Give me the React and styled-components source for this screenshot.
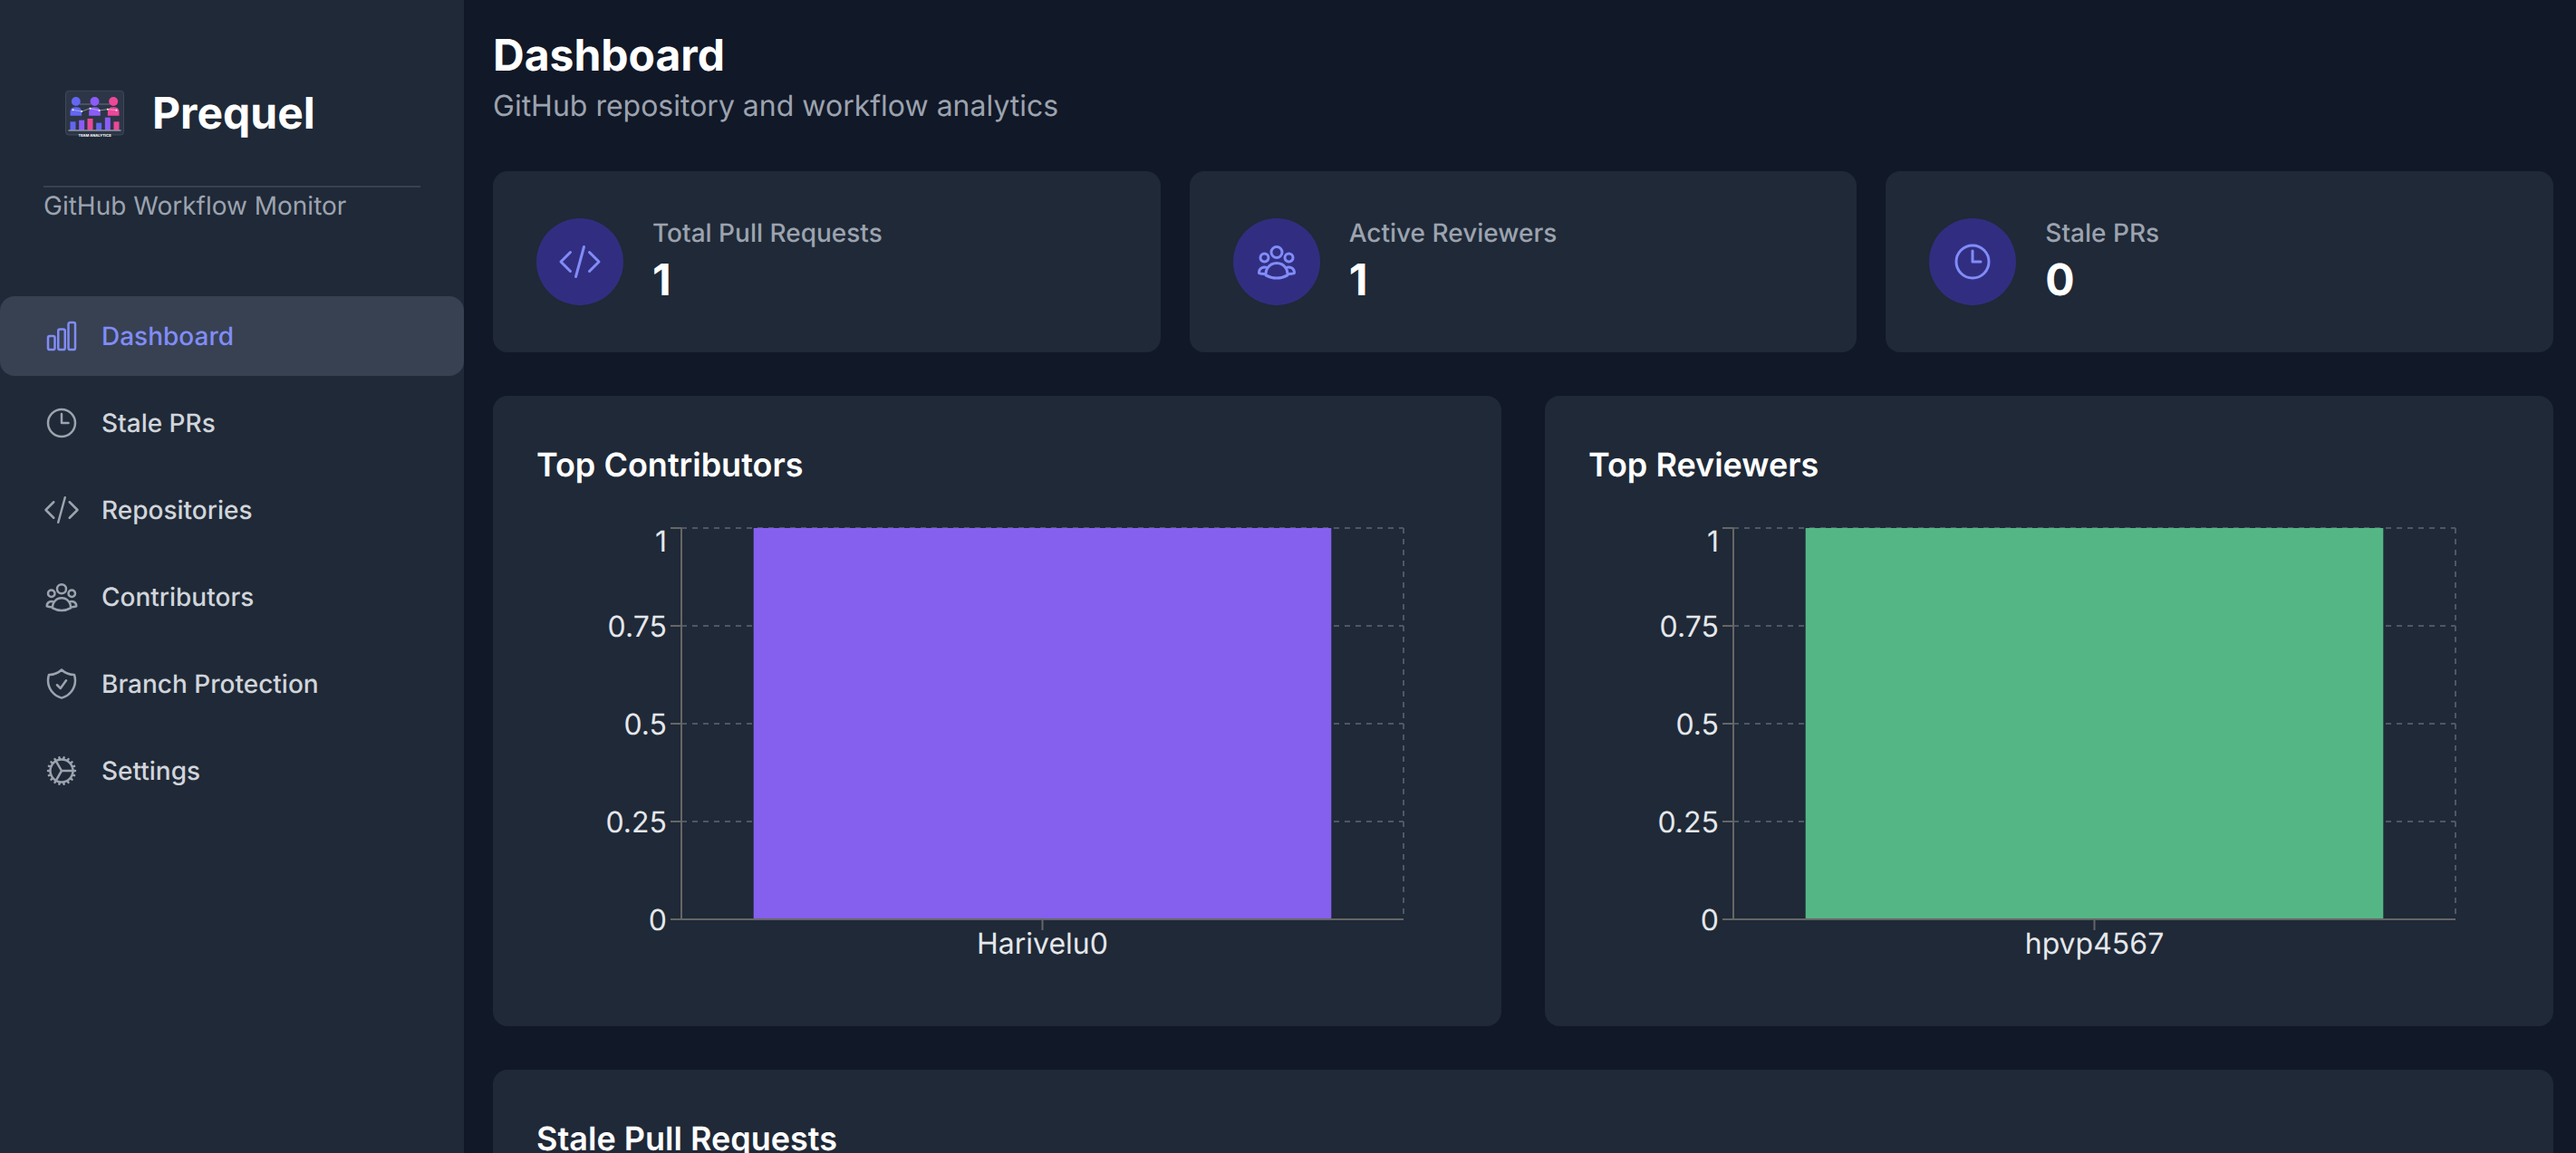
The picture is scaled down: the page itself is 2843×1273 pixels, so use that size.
import styled, { createGlobalStyle } from "styled-components";
import {
  HiOutlineChartBar,
  HiOutlineClock,
  HiOutlineCodeBracket,
  HiOutlineUserGroup,
  HiOutlineShieldCheck,
  HiOutlineCog,
} from "react-icons/hi2";

const GlobalStyle = createGlobalStyle`
  html, body {
    margin: 0;
    height: 100%;
    overflow: hidden;
    background: #111827;
    font-family: "Inter", "Liberation Sans", sans-serif;
    text-rendering: geometricPrecision;
  }
`;

const Shell = styled.div`
  display: flex;
  height: 100vh;
  overflow: hidden;
`;

const Sidebar = styled.aside`
  width: 512px;
  flex-shrink: 0;
  background: #1f2937;
  padding-top: 100px;
  box-sizing: border-box;
`;

const Brand = styled.div`
  display: flex;
  align-items: center;
  gap: 31px;
  height: 50px;
  padding-left: 72px;
`;

const BrandName = styled.span`
  font-size: 48px;
  font-weight: 700;
  color: #fff;
  line-height: 50px;
`;

const Divider = styled.hr`
  margin: 55px 48px 0;
  border: 0;
  height: 2px;
  background: #374151;
`;

const Tagline = styled.p`
  margin: 0;
  padding-left: 48px;
  font-size: 28px;
  line-height: 40px;
  color: #9ca3af;
`;

const Nav = styled.nav`
  display: flex;
  flex-direction: column;
  gap: 8px;
  margin-top: 80px;
`;

const NavItem = styled.a`
  display: flex;
  align-items: center;
  gap: 24px;
  height: 88px;
  padding-left: 48px;
  border-radius: 16px;
  font-size: 28px;
  font-weight: 500;
  background: ${(props) => (props.$active ? "#374151" : "transparent")};
  color: ${(props) => (props.$active ? "#818cf8" : "#d1d5db")};

  svg {
    color: ${(props) => (props.$active ? "#818cf8" : "#9ca3af")};
    flex-shrink: 0;
  }
`;

const Main = styled.main`
  flex: 1;
  min-width: 0;
  padding: 29px 25px 0 32px;
`;

const Title = styled.h1`
  margin: 0;
  font-size: 48px;
  line-height: 64px;
  font-weight: 700;
  color: #fff;
`;

const Subtitle = styled.p`
  margin: 0 0 48px;
  font-size: 32px;
  line-height: 48px;
  color: #9ca3af;
`;

const StatGrid = styled.section`
  display: grid;
  grid-template-columns: repeat(3, 1fr);
  gap: 32px;
  margin-bottom: 48px;
`;

const Card = styled.div`
  background: #1f2937;
  border-radius: 16px;
`;

const StatCard = styled(Card)`
  display: flex;
  align-items: center;
  gap: 32px;
  padding: 48px;
`;

const StatIcon = styled.div`
  width: 96px;
  height: 96px;
  border-radius: 50%;
  background: #312e81;
  color: #818cf8;
  display: flex;
  align-items: center;
  justify-content: center;
`;

const StatLabel = styled.div`
  font-size: 28px;
  line-height: 40px;
  font-weight: 500;
  color: #9ca3af;
`;

const StatValue = styled.div`
  font-size: 48px;
  line-height: 64px;
  font-weight: 700;
  color: #fff;
`;

const ChartGrid = styled.section`
  display: grid;
  grid-template-columns: repeat(2, 1fr);
  gap: 48px;
  margin-bottom: 48px;
`;

const Panel = styled(Card)`
  padding: 48px;
`;

const PanelTitle = styled.h2`
  margin: 0 0 32px;
  font-size: 36px;
  line-height: 56px;
  font-weight: 600;
  color: #fff;
`;

const ChartSvg = styled.svg`
  display: block;
  width: 100%;
  height: 512px;
  overflow: visible;

  text {
    font-family: "Inter", "Liberation Sans", sans-serif;
    font-size: 32px;
    fill: #e5e7eb;
  }
`;

const StalePanel = styled(Panel)`
  height: 400px;
`;

const navItems = [
  { label: "Dashboard", Icon: HiOutlineChartBar, active: true },
  { label: "Stale PRs", Icon: HiOutlineClock },
  { label: "Repositories", Icon: HiOutlineCodeBracket },
  { label: "Contributors", Icon: HiOutlineUserGroup },
  { label: "Branch Protection", Icon: HiOutlineShieldCheck },
  { label: "Settings", Icon: HiOutlineCog },
];

const stats = [
  { label: "Total Pull Requests", value: 1, Icon: HiOutlineCodeBracket },
  { label: "Active Reviewers", value: 1, Icon: HiOutlineUserGroup },
  { label: "Stale PRs", value: 0, Icon: HiOutlineClock },
];

const charts = [
  { title: "Top Contributors", name: "Harivelu0", color: "#8560ee" },
  { title: "Top Reviewers", name: "hpvp4567", color: "#55b685" },
];

const ticks = [
  { label: "1", y: 10, baseline: 36 },
  { label: "0.75", y: 118, baseline: 130 },
  { label: "0.5", y: 226, baseline: 238 },
  { label: "0.25", y: 334, baseline: 346 },
  { label: "0", y: 442, baseline: 454 },
];

const trendPoints = [
  [240, 365],
  [269, 370],
  [297, 360],
  [327, 367],
  [355, 363],
  [384, 366],
];

const Logo = () => (
  <svg width="65" height="50" viewBox="215 301 194 150" style={{ overflow: "visible", flexShrink: 0 }}>
    <rect x="216" y="302" width="192" height="146" rx="10" fill="#2d3646" stroke="#3f4857" strokeWidth="3" />
    <circle cx="250" cy="337" r="15" fill="#6366f1" />
    <circle cx="312" cy="337" r="15" fill="#8b5cf6" />
    <circle cx="374" cy="337" r="15" fill="#ec4899" />
    <path d="M231 384v-12q0-16 19-16t19 16v12z" fill="#6366f1" />
    <path d="M293 384v-12q0-16 19-16t19 16v12z" fill="#8b5cf6" />
    <path d="M355 384v-12q0-16 19-16t19 16v12z" fill="#ec4899" />
    <path d="M264 346h34M327 346h33" stroke="#e5e7eb" strokeWidth="2" strokeDasharray="3 3" />
    <polyline points={trendPoints.join(" ")} fill="none" stroke="#e5e7eb" strokeWidth="1.5" />
    {trendPoints.map(([x, y]) => (
      <rect key={x} x={x - 2.5} y={y - 2.5} width="5" height="5" fill="#fff" />
    ))}
    <rect x="231" y="404" width="18" height="28" fill="#6366f1" />
    <rect x="260" y="399" width="18" height="33" fill="#8b5cf6" />
    <rect x="288" y="394" width="18" height="38" fill="#ec4899" />
    <rect x="317" y="408" width="18" height="24" fill="#6366f1" />
    <rect x="346" y="390" width="18" height="42" fill="#8b5cf6" />
    <rect x="375" y="404" width="18" height="28" fill="#ec4899" />
    <rect x="225" y="431" width="174" height="4" fill="#9ca3af" />
    <text x="312" y="453" textAnchor="middle" fontSize="12" fontWeight="700" fill="#fff" fontFamily="Inter, sans-serif">
      TEAM ANALYTICS
    </text>
  </svg>
);

// same geometry as a 1017x512 bar chart with one category
const BarChart = ({ name, color }) => {
  const left = 160;
  const right = 957;
  const top = 10;
  const bottom = 442;
  const center = (left + right) / 2;
  const bandGap = (right - left) * 0.1;

  return (
    <ChartSvg viewBox="0 0 1017 512">
      {ticks.map((tick) => (
        <line key={tick.label} x1={left} x2={right} y1={tick.y} y2={tick.y} stroke="#4f5765" strokeWidth="2" strokeDasharray="6 6" />
      ))}
      <line x1={right} x2={right} y1={top} y2={bottom} stroke="#4f5765" strokeWidth="2" strokeDasharray="6 6" />
      <rect x={left + bandGap} y={top} width={right - left - bandGap * 2} height={bottom - top} fill={color} />
      <line x1={left} x2={left} y1={top} y2={bottom} stroke="#666" strokeWidth="2" />
      <line x1={left} x2={right} y1={bottom} y2={bottom} stroke="#666" strokeWidth="2" />
      {ticks.map((tick) => (
        <g key={tick.label}>
          <line x1={left - 12} x2={left} y1={tick.y} y2={tick.y} stroke="#666" strokeWidth="2" />
          <text x={left - 16} y={tick.baseline} textAnchor="end">
            {tick.label}
          </text>
        </g>
      ))}
      <line x1={center} x2={center} y1={bottom} y2={bottom + 12} stroke="#666" strokeWidth="2" />
      <text x={center} y={bottom + 38} textAnchor="middle">
        {name}
      </text>
    </ChartSvg>
  );
};

const App = () => (
  <>
    <GlobalStyle />
    <Shell>
      <Sidebar>
        <Brand>
          <Logo />
          <BrandName>Prequel</BrandName>
        </Brand>
        <Divider />
        <Tagline>GitHub Workflow Monitor</Tagline>
        <Nav>
          {navItems.map(({ label, Icon, active }) => (
            <NavItem key={label} $active={active}>
              <Icon size={40} />
              {label}
            </NavItem>
          ))}
        </Nav>
      </Sidebar>
      <Main>
        <Title>Dashboard</Title>
        <Subtitle>GitHub repository and workflow analytics</Subtitle>
        <StatGrid>
          {stats.map(({ label, value, Icon }) => (
            <StatCard key={label}>
              <StatIcon>
                <Icon size={48} />
              </StatIcon>
              <div>
                <StatLabel>{label}</StatLabel>
                <StatValue>{value}</StatValue>
              </div>
            </StatCard>
          ))}
        </StatGrid>
        <ChartGrid>
          {charts.map((chart) => (
            <Panel key={chart.title}>
              <PanelTitle>{chart.title}</PanelTitle>
              <BarChart name={chart.name} color={chart.color} />
            </Panel>
          ))}
        </ChartGrid>
        <StalePanel>
          <PanelTitle>Stale Pull Requests</PanelTitle>
        </StalePanel>
      </Main>
    </Shell>
  </>
);

export default App;
